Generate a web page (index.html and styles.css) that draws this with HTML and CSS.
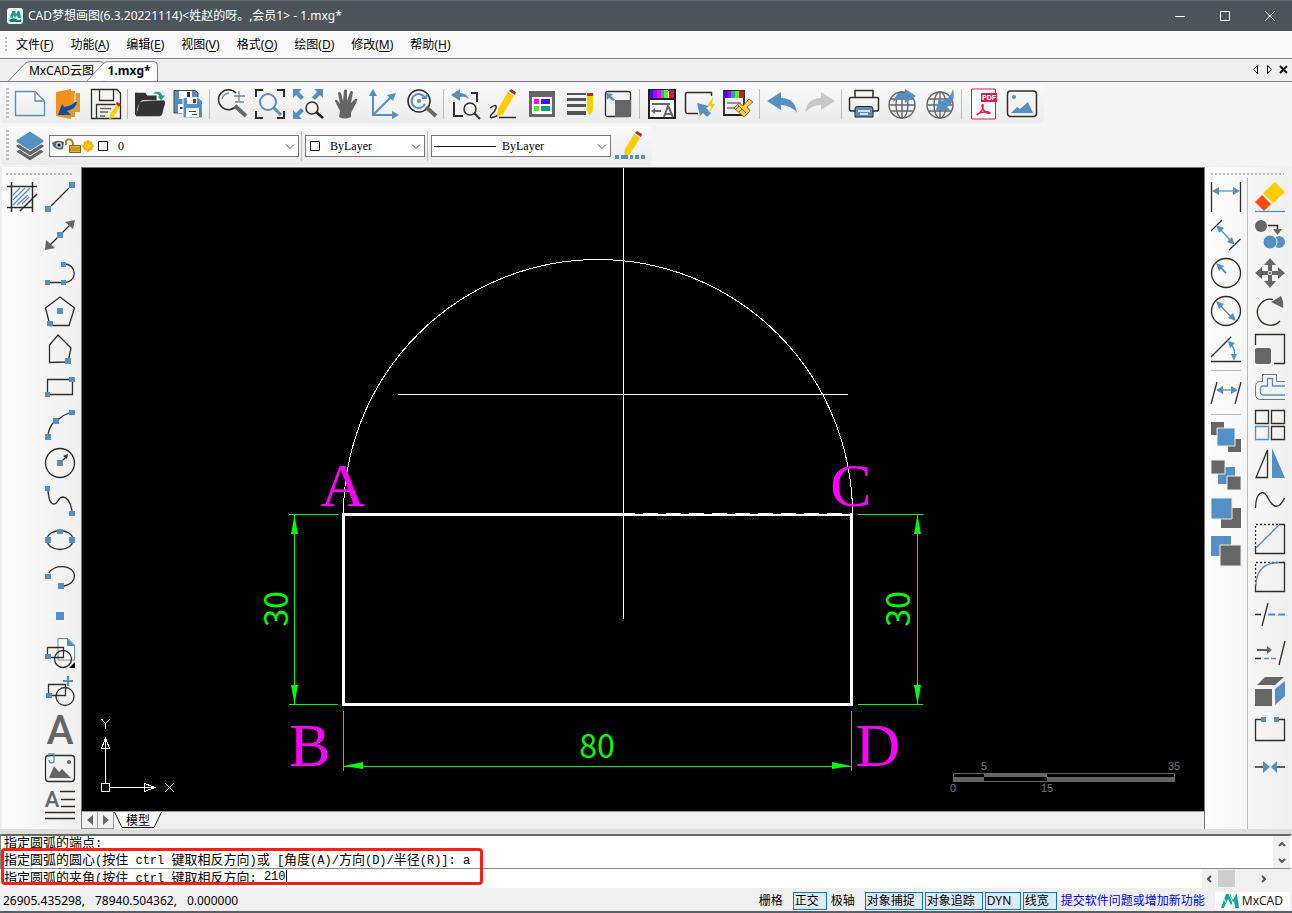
FILE: index.html
```html
<!DOCTYPE html>
<html lang="zh-CN">
<head>
<meta charset="utf-8">
<title>CAD梦想画图</title>
<link rel="stylesheet" href="styles.css">
</head>
<body>
<div class="app">
<header class="titlebar">
  <svg class="app-icon" viewBox="0 0 16 16"><rect width="16" height="16" rx="3" fill="#eef4f4"/><path d="M3 9L5.500 3H8L9 6L11 3H12.500L14 10H11L10 7L8 10L7 7L5.500 10Z" fill="#10a090"/><path d="M2 12Q6 9 9 11T14 11V14H3Z" fill="#088078"/></svg>
  <span class="title">CAD梦想画图(6.3.20221114)&lt;姓赵的呀。,会员1&gt; - 1.mxg*</span>
  <div class="win-buttons">
    <button aria-label="最小化"><svg viewBox="0 0 12 12"><path d="M1 6.500H11"/></svg></button>
    <button aria-label="最大化"><svg viewBox="0 0 12 12"><path d="M1.500 1.500H10.500V10.500H1.500Z"/></svg></button>
    <button aria-label="关闭"><svg viewBox="0 0 12 12"><path d="M1 1L11 11M11 1L1 11"/></svg></button>
  </div>
</header>
<nav class="menubar">
  <span class="grip"></span>
  <button>文件(<u>F</u>)</button><button>功能(<u>A</u>)</button><button>编辑(<u>E</u>)</button><button>视图(<u>V</u>)</button><button>格式(<u>O</u>)</button><button>绘图(<u>D</u>)</button><button>修改(<u>M</u>)</button><button>帮助(<u>H</u>)</button>
</nav>
<div class="tabbar">
  <button class="tab tab-cloud"><svg viewBox="0 0 96 20"><path d="M0 20L16 3Q18 .500 22 .500H92Q95 .500 95.500 4V20" /></svg><span>MxCAD云图</span></button>
  <button class="tab tab-active"><svg viewBox="0 0 72 20"><path d="M0 20L16 3Q18 .500 22 .500H68Q71 .500 71.500 4V20"/></svg><span>1.mxg*</span></button>
  <div class="tab-tools">
    <button aria-label="上一个"><svg viewBox="0 0 9 9"><path d="M6.500 .500V8.500L2.500 4.500Z"/></svg></button>
    <button aria-label="下一个"><svg viewBox="0 0 9 9"><path d="M2.500 .500V8.500L6.500 4.500Z"/></svg></button>
    <button aria-label="关闭标签"><svg viewBox="0 0 9 9"><path class="heavy" d="M1 1L8 8M8 1L1 8"/></svg></button>
  </div>
</div>

<div class="toolrow">
<div class="toolbar">
  <span class="grip"></span>
  <button aria-label="新建"><svg viewBox="0 0 30 30"><path class="bl" fill="#fafafa" d="M.500 2.500H20L29.500 12V26.500H.500Z"/><path class="bl" d="M20 2.500V12H29.500"/></svg></button>
  <button aria-label="打开"><svg viewBox="0 0 30 30"><path fill="#e09a3c" d="M18 2H22V4H27V23H22V28H18Z"/><path fill="#f09020" d="M3 3L18 0V30L3 27Z"/><path stroke="#fff" stroke-width=".8" d="M22 4V14"/><path fill="#0c4fa0" d="M5 26L9 15L11 18Q19 17 22 13H24Q23 20 14 22L18 26Z"/></svg></button>
  <button aria-label="保存"><svg viewBox="0 0 30 30"><path class="k" d="M.500 .500H26L29.500 4V29.500H.500ZM8.500 .500V11.500H22.500V.500M5.500 29V15.500H24.500"/><path stroke="#666" stroke-width="1.500" d="M9 19.500H20M9 23H17M9 27H14"/><path fill="#fc0" d="M26 15L29 18L22 29L18 30L19 25Z"/><path fill="#c8202c" d="M26 13L30 15L28 18L25 15Z"/></svg></button>
  <i class="sep"></i>
  <button aria-label="打开文件夹"><svg viewBox="0 0 32 30"><path fill="#333" d="M0 26V3H11L13 6H23V11H8Q4 12 1 26ZM1 27L5 14Q6 12 9 12L31 11Q33 13 31 18L29 26Q28 28 26 28H1Z"/><path fill="none" stroke="#333" stroke-width="1.500" d="M1 3V26H4"/><path fill="#10a098" d="M20 3Q27 0 29 6H32L28 11L24 7H26Q25 3 20 4Z"/></svg></button>
  <button aria-label="全部保存"><svg viewBox="0 0 30 30"><path fill="#5590c4" stroke="#444" d="M1 1.500H22L25 4V24H1Z"/><path fill="#fff" d="M6 2H19V10H6ZM5 15H14V24H5Z"/><path fill="#333" d="M14 3H17V8H14ZM7 18H12V20H7Z"/><path fill="#5590c4" stroke="#fff" d="M10 8.500H25L29.500 12V29H10Z"/><path fill="#fff" d="M14 9H24V15H14ZM13 19H26V28H13Z"/><path fill="#444" d="M20 10H23V14H20ZM16 22H23V23H16ZM19 25H24V26H19Z"/></svg></button>
  <i class="sep"></i>
  <button aria-label="缩放"><svg viewBox="0 0 30 30"><path class="k2" d="M20 16A10 10 0 1 1 19 4"/><path class="bl" stroke-width="1.800" d="M5 10Q6 5 12 4M22 2V12M17 7H28M18 13H27"/><path stroke="#666" stroke-width="4" d="M18 17L29 27"/></svg></button>
  <button aria-label="窗口缩放"><svg viewBox="0 0 30 30"><path class="k2 strong" d="M1 8V1H8M22 1H29V8M1 22V29H8M22 29H29V22"/><circle class="bl wide" cx="13" cy="13" r="8"/><path stroke="#5590c4" stroke-width="3" d="M18 18L26 26"/></svg></button>
  <button aria-label="全图"><svg viewBox="0 0 30 30"><path class="b" d="M0 0H9L6 3L11 8L8 11L3 6L0 9ZM30 0V9L27 6L22 11L19 8L24 3L21 0ZM0 30V21L3 24L8 19L11 22L6 27L9 30Z"/><circle class="k2" cx="19" cy="19" r="6"/><path stroke="#222" stroke-width="2.500" d="M23 23L30 29"/></svg></button>
  <button aria-label="平移"><svg viewBox="0 0 30 30"><path fill="#666" d="M8 28L9 22L4 12Q4 10 6 11L9 15L7 4Q8 2 10 4L12 12L13 1Q14 0 16 1V12L19 3Q20 1 22 3L20 14L24 10Q27 9 26 12L20 24V28Q14 31 8 28Z"/></svg></button>
  <button aria-label="坐标"><svg viewBox="0 0 30 30"><path stroke="#5590c4" stroke-width="2" fill="none" d="M4 5V26H25M5 25L22 8"/><path class="b" d="M4 0L8 7H0ZM30 26L23 22V30ZM27 4L24 12L18 6Z"/></svg></button>
  <button aria-label="返回缩放"><svg viewBox="0 0 30 30"><circle class="k2" cx="12" cy="12" r="11"/><path class="bl wide" d="M18 9A7 7 0 1 0 18 15M15 9L19 9L20 5"/><circle cx="12" cy="12" r="2" fill="#5590c4"/><path stroke="#666" stroke-width="4" d="M19 18L29 27"/></svg></button>
  <i class="sep"></i>
  <button aria-label="上一视图"><svg viewBox="0 0 30 30"><path class="b" d="M0 6L9 0V4Q16 4 18 10Q14 7 9 8V12Z"/><path class="k2 strong" d="M3 13V27H12M20 4H26V13"/><circle class="k2" cx="19" cy="20" r="6"/><path class="k2 strong" d="M23 24L29 30"/></svg></button>
  <button aria-label="画笔"><svg viewBox="0 0 30 30"><path class="k2" d="M1 19Q8 14 7 19Q6 23 2 26Q0 30 5 28L10 26M10 28.500H27"/><path fill="#fc0" d="M19 3L25 7L14 25L8 28L9 20Z"/><path fill="#c8202c" d="M20 2L22 0L27 3L26 6Z"/></svg></button>
  <button aria-label="图层属性"><svg viewBox="0 0 30 30"><path fill="#666" d="M2 2H28V28H2Z"/><path fill="#fff" d="M5 8H25V25H5Z"/><path fill="#f0f" d="M7 10H12V15H7Z"/><path fill="#4010f0" d="M14 10H23V15H14Z"/><path fill="#4e2" d="M7 17H12V22H7Z"/><path fill="#0aa098" d="M14 17H23V22H14Z"/></svg></button>
  <button aria-label="线型"><svg viewBox="0 0 30 30"><path fill="#555" d="M2 4H21V6H2ZM2 9H21V12H2ZM2 15H21V18H2ZM2 22H21V26H2Z"/><path fill="#fc0" d="M22 6H28V22L25 26L22 22Z"/><path fill="#c8202c" d="M22 4H28V7H22Z"/></svg></button>
  <button aria-label="视口"><svg viewBox="0 0 30 30"><rect class="k" x="2.500" y="2.500" width="25" height="25" rx="2"/><path fill="#666" d="M12 11H28V28H12Z"/><path class="b" d="M3 4L10 5L8 7L12 11L10 12L6 9L4 11Z"/></svg></button>
  <i class="sep"></i>
  <button aria-label="文字颜色"><svg viewBox="0 0 30 30"><path fill="#f7f7f7" stroke="#222" stroke-width="2" d="M2 1H28V29H2Z"/><path fill="#4010f0" d="M3 1H7V9H3Z"/><path fill="#a010f0" d="M6 1H10V9H6Z"/><path fill="#f0f" d="M10 1H14V9H10Z"/><path fill="#16b4a0" d="M14 1H17V9H14Z"/><path fill="#6e1" d="M17 1H21V9H17Z"/><path fill="#d01c24" d="M22 1H27V9H22Z"/><path fill="#222" d="M2 9H28V11H2Z"/><path stroke="#666" stroke-width="2" fill="none" d="M5 15H23M7 22H14M17 28L21 17L26 28M18 25H25"/><path fill="#666" d="M4 22L8 19V25Z"/></svg></button>
  <button aria-label="快速选择"><svg viewBox="0 0 30 30"><path class="k2" d="M13 24.500H2Q.500 24 .500 22V5Q.500 3.500 2 3.500H26.500V7"/><path class="b" d="M12 14L24 17L21 19L26 24L22 28L18 24L15 27Z"/><path fill="#fc0" d="M28 8L22 17H26L24 24L30 15H27Z"/></svg></button>
  <button aria-label="格式刷"><svg viewBox="0 0 30 30"><path fill="#eee" stroke="#222" stroke-width="1.800" d="M1 2H21V26H1Z"/><path fill="#4010f0" d="M1 2H5V9H1Z"/><path fill="#a010f0" d="M5 2H8V9H5Z"/><path fill="#16b4a0" d="M8 2H12V9H8Z"/><path fill="#6e1" d="M12 2H16V9H12Z"/><path fill="#d01c24" d="M16 2H21V9H16Z"/><path stroke="#777" stroke-width="1.500" d="M4 14H18M4 19H15"/><path fill="#fc3" stroke="#866" d="M26 10L30 13L24 18L27 22L21 28L11 19L16 14L20 17Z"/><path stroke="#856" fill="none" d="M15 16L23 24M13 20L16 17M16 23L19 20"/></svg></button>
  <i class="sep"></i>
  <button aria-label="撤销"><svg viewBox="0 0 30 30"><path class="b" d="M0 12L14 3V9Q28 9 30 24Q24 16 14 16V21Z"/></svg></button>
  <button aria-label="重做"><svg viewBox="0 0 30 30"><path fill="#c8c8c8" d="M30 12L16 3V9Q2 9 0 24Q6 16 16 16V21Z"/></svg></button>
  <i class="sep"></i>
  <button aria-label="打印"><svg viewBox="0 0 30 30"><path class="k2" fill="#fff" d="M6 8V1.500H24V8M6 22H2Q.500 22 .500 20V10Q.500 8.500 2 8.500H28Q29.500 8.500 29.500 10V20Q29.500 22 28 22H24"/><path fill="#5590c4" stroke="#222" d="M6 28V20Q6 17.500 8 17.500H22Q24 17.500 24 20V28Z"/><path stroke="#fff" stroke-width="1.500" d="M9 22H21M11 25H19"/></svg></button>
  <button aria-label="上传"><svg viewBox="0 0 30 30"><g class="globe"><circle cx="15" cy="16" r="13"/><ellipse cx="15" cy="16" rx="6" ry="13"/><path d="M15 3V29M2 16H28M4 10H26M4 22H26"/></g><path class="b" d="M6 13Q8 3 18 4V0L29 7L18 14V10Q11 9 6 13Z"/></svg></button>
  <button aria-label="下载"><svg viewBox="0 0 30 30"><g class="globe"><circle cx="15" cy="16" r="13"/><ellipse cx="15" cy="16" rx="6" ry="13"/><path d="M15 3V29M2 16H28M4 10H26M4 22H26"/></g><path class="b" d="M28 0Q31 13 22 18L25 21L11 21L14 9L17 12Q26 9 28 0Z"/></svg></button>
  <i class="sep"></i>
  <button aria-label="导出PDF"><svg viewBox="0 0 30 30"><path fill="#fff" stroke="#d81e4a" d="M2.500 0H26.500V30H2.500Z"/><rect x="12" y="4" width="16" height="9" fill="#d81e4a"/><text x="13" y="11" class="pdf">PDF</text><path fill="none" stroke="#d81e4a" stroke-width="1.500" d="M8 26Q15 21 14 16Q12 15 14 20Q17 25 21 24Q20 22 15 23Q9 24 8 26Z"/></svg></button>
  <button aria-label="图像"><svg viewBox="0 0 30 30"><rect class="k2" x=".500" y="2" width="29" height="25.500" rx="3"/><path class="b" d="M4 24L10 18L13 20L21 13L26 24Z"/><circle cx="7" cy="8" r="2" fill="#5590c4"/></svg></button>
</div>
</div>
<div class="toolrow">
<div class="toolbar">
  <span class="grip"></span>
  <button aria-label="图层管理"><svg viewBox="0 0 30 30"><path fill="#666" stroke="#f7f7f7" d="M1 20L15 13L29 20V21L15 30L1 21Z"/><path fill="#666" stroke="#f7f7f7" d="M1 14L15 8L29 14V16L15 25L1 16Z"/><path fill="#5590c4" stroke="#f7f7f7" d="M1 9L15 0L29 9V11L15 20L1 11Z"/></svg></button>
  <div class="combo combo-layer"><select aria-label="图层"><option>0</option></select>
    <svg class="combo-art" viewBox="0 0 60 16"><path fill="#567" d="M1 5Q6 1 13 4L12 11Q6 13 2 8Z"/><circle cx="8" cy="7" r="3" fill="#bcd"/><circle cx="8" cy="7" r="1.500" fill="#123"/><path fill="none" stroke="#b08010" stroke-width="2" d="M15 7V3Q17 0 20 2Q22 3 22 8"/><path fill="#e8b830" stroke="#8a6410" d="M18.500 7.500H29.500V14.500H18.500Z"/><path stroke="#a87818" d="M19 10H29M19 12H29"/><circle cx="37" cy="8" r="4" fill="#fc0" stroke="#f8a800" stroke-width="2"/><path stroke="#f8a800" stroke-width="1.500" d="M37 2V4M37 12V14M31 8H33M41 8H43M33 4L34 5M41 4L40 5M33 12L34 11M41 12L40 11"/><path fill="#fff" stroke="#111" d="M47.500 3.500H56.500V12.500H47.500Z"/></svg>
    <svg class="chev" viewBox="0 0 10 6"><path d="M1 .500L5 4.500L9 .500"/></svg></div>
  <i class="sep"></i>
  <div class="combo combo-color"><select aria-label="颜色"><option>ByLayer</option></select><svg class="combo-art" viewBox="0 0 16 16"><path fill="#fff" stroke="#111" d="M3.500 3.500H12.500V12.500H3.500Z"/></svg><svg class="chev" viewBox="0 0 10 6"><path d="M1 .500L5 4.500L9 .500"/></svg></div>
  <i class="sep"></i>
  <div class="combo combo-line"><select aria-label="线型"><option>ByLayer</option></select><svg class="combo-art" viewBox="0 0 64 16"><path stroke="#111" d="M1 8.500H63"/></svg><svg class="chev" viewBox="0 0 10 6"><path d="M1 .500L5 4.500L9 .500"/></svg></div>
  <button aria-label="线型编辑"><svg viewBox="0 0 30 30"><path fill="#fc0" d="M19 3L25 7L15 23L9 26L10 18Z"/><path fill="#c8202c" d="M20 2L22 0L27 3L26 6Z"/><path class="b" d="M0 24H4V28H0ZM6 24H13V28H6ZM15 24H18V28H15ZM20 24H24V28H20ZM26 24H30V28H26Z"/></svg></button>
</div>
</div>

<main class="main">
<aside class="side">
<div class="dots"></div>
<div class="cols">
<div class="col">
  <button aria-label="填充"><svg viewBox="0 0 30 30"><path class="k2" d="M0 4.500H30M0 25.500H25M4.500 0V30M25.500 0V30M13 29L30 12"/><path class="bl" stroke-width="1.800" d="M6 13L13 6M6 18L18 6M6 23L23 6M10 23L21 13M15 22L22 15"/></svg></button>
</div>
<div class="col">
  <button aria-label="直线"><svg viewBox="0 0 30 30"><path class="k" d="M6 24L24 6"/><path class="b" d="M24 0H30V6H24ZM0 24H6V30H0Z"/></svg></button>
  <button aria-label="构造线"><svg viewBox="0 0 30 30"><path class="k" d="M5 25L25 5"/><path class="g" d="M30 0L28 9L20 2ZM0 30L1 20L10 28Z"/><path class="b" d="M12 12H18V18H12Z"/></svg></button>
  <button aria-label="多段线"><svg viewBox="0 0 30 30"><path class="k" d="M4 24.500H17M20 6A9 9 0 0 1 20 24.500"/><path class="b" d="M0 22H5V27H0ZM16 22H21V27H16ZM16 4H21V9H16Z"/></svg></button>
  <button aria-label="正多边形"><svg viewBox="0 0 30 30"><path class="k" d="M15 1L29.500 12L24 29.500H5L.500 12Z"/><path class="b" d="M12 12H18V18H12ZM2 25H8V30H2Z"/></svg></button>
  <button aria-label="多边形"><svg viewBox="0 0 30 30"><path class="k" d="M13 1L26 14L23 28L4.500 28.500V11Z"/><path class="b" d="M20 24H26V30H20Z"/></svg></button>
  <button aria-label="矩形"><svg viewBox="0 0 30 30"><path class="k" d="M2.500 7.500H27.500V22.500H2.500Z"/><path class="b" d="M24 5H30V10H24ZM0 20H5V25H0Z"/></svg></button>
  <button aria-label="圆弧"><svg viewBox="0 0 30 30"><path class="k" d="M3 24Q5 16 9 12M14 9Q18 5 24 3"/><path class="b" d="M24 0H30V5H24ZM8 8H14V14H8ZM0 24H6V30H0Z"/></svg></button>
  <button aria-label="圆"><svg viewBox="0 0 30 30"><circle class="k" cx="15" cy="15" r="14.500"/><path class="k" d="M17 13L22 8"/><path fill="#333" d="M23 6L22 11L18 8Z"/><path class="b" d="M12 12H18V18H12Z"/></svg></button>
  <button aria-label="样条曲线"><svg viewBox="0 0 30 30"><path class="k" d="M3 5Q4 18 9 18C13 18 13 11 18 11Q25 12 27 25"/><path class="b" d="M0 0H5V5H0ZM24 25H30V30H24Z"/></svg></button>
  <button aria-label="椭圆"><svg viewBox="0 0 30 30"><ellipse class="k" cx="15" cy="16" rx="13" ry="9.500"/><path class="b" d="M12 5H18V10H12ZM0 13H6V19H0ZM24 13H30V19H24Z"/></svg></button>
  <button aria-label="椭圆弧"><svg viewBox="0 0 30 30"><path class="k" d="M4 11C8 2 29 2 29.500 14C29 21 24 23 19 24"/><path class="b" d="M0 12H6V17H0ZM13 21H19V27H13Z"/></svg></button>
  <button aria-label="点"><svg viewBox="0 0 30 30"><path class="b" d="M11 12H19V20H11Z"/></svg></button>
  <button aria-label="插入块"><svg viewBox="0 0 30 30"><path fill="#fff" stroke="#5590c4" d="M13 .500H23L29.500 7V22H13Z"/><path class="b" d="M22 0V8H30Z"/><path class="k" d="M2.500 9.500H18.500V19.500H2.500Z"/><circle class="k" cx="18" cy="21" r="8.500"/><path class="b" d="M0 16H6V21H0Z"/><path d="M30 24V30H24Z"/></svg></button>
  <button aria-label="创建块"><svg viewBox="0 0 30 30"><path class="bl wide" d="M23 0V10M18 5H28"/><path class="k" d="M3.500 8.500H20.500V19.500H3.500Z"/><circle class="k" cx="20" cy="20.500" r="9"/><path class="b" d="M1 17H7V22H1Z"/></svg></button>
  <button aria-label="文字"><svg viewBox="0 0 30 30"><text class="glyph big" x="15" y="30">A</text></svg></button>
  <button aria-label="插入图片"><svg viewBox="0 0 30 30"><rect class="k" x=".500" y="3.500" width="29" height="26" rx="3"/><path class="g" d="M4 26L9 14L14 20L17 17L26 26Z"/><circle class="g" cx="24" cy="10" r="2"/><path class="bl" d="M4 5V2H9V9Q9 11 6.500 11Q4 11 4 8"/></svg></button>
  <button aria-label="多行文字"><svg viewBox="0 0 30 30"><text class="glyph small" x="7" y="17">A</text><path class="k2" d="M15 1.500H30M16 9.500H30M16 16.500H30M0 22.500H30M0 28.500H30"/></svg></button>
</div>
</div>
</aside>

<section class="work">
<svg class="canvas" role="img" aria-label="绘图区">
<g transform="translate(-82 -168)">
  <path class="cad-thin" d="M343.500 514.500A254.500 255 0 0 1 852.500 514.500"/>
  <path class="cad-thick" d="M343.500 514.500H851.500V704.500H343.500Z"/>
  <path stroke="#000" stroke-dasharray="8 15" d="M635 513.500H850"/>
  <path class="cad-thin" d="M623.500 168V619M398 394.500H848"/>
  <path class="cad-dim" d="M289 514.500H338M289 704.500H338M294.500 515V704M858 514.500H923M858 704.500H923M917.500 515V704M343.500 711V771M851.500 711V771M344 766.500H851"/>
  <path class="cad-fill" d="M294.500 515L291 534H298ZM294.500 704L291 685H298ZM917.500 515L914 534H921ZM917.500 704L914 685H921ZM344 766L363 762V769ZM851 766L832 762V769Z"/>
  <text class="dim-text" x="597" y="758">80</text>
  <text class="dim-text" transform="translate(288 609) rotate(-90)">30</text>
  <text class="dim-text" transform="translate(910 609) rotate(-90)">30</text>
  <g class="point-label"><text x="343" y="506">A</text><text x="851" y="506">C</text><text x="310" y="766">B</text><text x="878" y="766">D</text></g>
  <path class="cad-thin" d="M101.500 783.500H109.500V791.500H101.500ZM105.500 783V749M110 787.500H144M105.500 738L101.500 748.500H109.500ZM155 787.500L144.500 783.500V791.500ZM105.500 739V748M154 787.500H145M101.500 719L105.500 723.500L110 719M105.500 723V729M165 783L174 792M174 783L165 792"/>
  <path fill="#646464" d="M953 773H1175V782H953Z"/>
  <path d="M954 774H984V777H954ZM984 777H1047V781H984ZM1047 774H1174V777H1047Z"/>
  <g class="scale-text"><text x="984" y="770">5</text><text x="1174" y="770">35</text><text x="953" y="792">0</text><text x="1047" y="792">15</text></g>
</g>
</svg>
<div class="sheet-tabs">
  <button class="nav" aria-label="向左"><svg viewBox="0 0 6 10"><path d="M6 0V10L0 5Z"/></svg></button>
  <button class="nav" aria-label="向右"><svg viewBox="0 0 6 10"><path d="M0 0V10L6 5Z"/></svg></button>
  <button class="sheet"><svg viewBox="0 0 48 16"><path d="M.500 0L8 15.500H40L47.500 0"/></svg><span>模型</span></button>
</div>
</section>

<aside class="side side-right">
<div class="dots"></div>
<div class="cols">
<div class="col">
  <button aria-label="线性标注"><svg viewBox="0 0 30 30"><path class="k" d="M.500 0V30M29.500 0V30"/><path class="bl" d="M6 9H24"/><path class="b" d="M1 9L8 5V13ZM29 9L22 5V13Z"/></svg></button>
  <button aria-label="对齐标注"><svg viewBox="0 0 30 30"><path class="k" d="M0 11L11 0M18 30L29.500 19"/><path class="bl" d="M8 8L21 22"/><path class="b" d="M5 5L13 8L8 13ZM24 25L16 22L21 17Z"/></svg></button>
  <button aria-label="半径标注"><svg viewBox="0 0 30 30"><circle class="k" cx="15" cy="15" r="14.500"/><path class="bl wide" d="M15 15L8 8"/><path class="b" d="M5 5L13 8L8 13Z"/></svg></button>
  <button aria-label="直径标注"><svg viewBox="0 0 30 30"><circle class="k" cx="15" cy="15" r="14.500"/><path class="bl" d="M8 8L21 22"/><path class="b" d="M5 5L13 8L8 13ZM25 25L17 22L22 17Z"/></svg></button>
  <button aria-label="角度标注"><svg viewBox="0 0 30 30"><path class="k" d="M0 23L20 3M0 27.500H30"/><path class="bl" d="M20 10Q25 16 23 23"/><path class="b" d="M17 7L24 9L19 14ZM23 27L20 20H26Z"/></svg></button>
  <i class="hsep"></i>
  <button aria-label="连续标注"><svg viewBox="0 0 30 30"><path class="k" d="M0 26L6 4M24 26L30 4"/><path class="bl" d="M10 12H22"/><path class="b" d="M5 12L12 8V16ZM27 12L20 8V16Z"/></svg></button>
  <i class="hsep"></i>
  <button aria-label="前置"><svg viewBox="0 0 30 30"><path class="g" d="M0 0H13V13H0ZM17 17H30V30H17Z"/><path class="b edge" d="M6 6H24V24H6Z"/></svg></button>
  <button aria-label="后置"><svg viewBox="0 0 30 30"><path class="b" d="M7 7H24V24H7Z"/><path class="g edge" d="M0 0H14V14H0ZM16 16H30V30H16Z"/></svg></button>
  <button aria-label="置于对象之上"><svg viewBox="0 0 30 30"><path class="g" d="M10 10H30V30H10Z"/><path class="b edge" d="M0 0H21V21H0Z"/></svg></button>
  <button aria-label="置于对象之下"><svg viewBox="0 0 30 30"><path class="b" d="M0 0H20V20H0Z"/><path class="g edge" d="M9 9H30V30H9Z"/></svg></button>
</div>
<div class="col col-lined">
  <button aria-label="删除"><svg viewBox="0 0 30 30"><path fill="#fc0" d="M20 0L30 10L18 21L8 11Z"/><path fill="#ff4a10" d="M7 13L16 22L9 29L0 20Z"/><path class="bl" d="M0 29.500H30"/></svg></button>
  <button aria-label="复制"><svg viewBox="0 0 30 30"><circle class="g" cx="6" cy="6" r="6"/><path class="k2" d="M13 5.500H22.500V10"/><path class="g" d="M18 9H27L22.500 15Z"/><circle cx="24" cy="22" r="6" fill="#5590c4"/><circle cx="15" cy="22" r="7" fill="#5590c4" stroke="#f5f5f5"/></svg></button>
  <button aria-label="移动"><svg viewBox="0 0 30 30"><path class="g" d="M15 0L21 7H17V13H23V9L30 15L23 21V17H17V23H21L15 30L9 23H13V17H7V21L0 15L7 9V13H13V7H9Z"/><path stroke="#ddd" fill="none" d="M13.500 13.500H16.500V16.500H13.500Z"/></svg></button>
  <button aria-label="旋转"><svg viewBox="0 0 30 30"><path class="k" d="M18 3.500A13 13 0 1 0 25 25"/><path class="g" d="M16 6L26 0Q29 6 28 12Z"/></svg></button>
  <button aria-label="缩放对象"><svg viewBox="0 0 30 30"><path class="k" d="M.500 11V.500H29.500V29.500H19"/><rect class="g" y="14" width="16" height="16" rx="2"/></svg></button>
  <button aria-label="偏移"><svg viewBox="0 0 30 30"><path fill="none" stroke="#777" d="M30 9.500H21.500V2.500H7.500V9.500H5Q.500 9.500 .500 15V22Q.500 27.500 6 27.500H30"/><path class="bl" d="M30 14H17.500V6.500H12.500V14H8Q5.500 14 5.500 17V20Q5.500 23 9 23H30"/></svg></button>
  <button aria-label="阵列"><svg viewBox="0 0 30 30"><path class="k" d="M.500 .500H13.500V13.500H.500ZM16.500 .500H29.500V13.500H16.500ZM16.500 16.500H29.500V29.500H16.500Z"/><path class="bl" d="M.500 16.500H13.500V29.500H.500Z"/></svg></button>
  <button aria-label="镜像"><svg viewBox="0 0 30 30"><path class="k" d="M12.500 2V29.500H1Z"/><path class="b" d="M17 0L30 30H17Z"/></svg></button>
  <button aria-label="编辑样条"><svg viewBox="0 0 30 30"><path class="k" d="M.500 22C1 4 9 4 13 12C18 22 24 24 29.500 12"/></svg></button>
  <button aria-label="倒角"><svg viewBox="0 0 30 30"><path class="k" stroke-dasharray="2 2" d="M.500 24V.500H24"/><path class="k" d="M.500 24V29.500H29.500V.500H24"/><path class="bl" d="M1 24L24 1"/></svg></button>
  <button aria-label="圆角"><svg viewBox="0 0 30 30"><path class="k" stroke-dasharray="2 2" d="M.500 24V.500H24"/><path class="k" d="M.500 24V29.500H29.500V.500H24"/><path class="bl" d="M1 24Q1 1 24 .500"/></svg></button>
  <button aria-label="修剪"><svg viewBox="0 0 30 30"><path class="k" d="M0 14.500H6M7 26L13 3"/><path class="bl wide" d="M13 14.500H20M23 14.500H30"/></svg></button>
  <button aria-label="延伸"><svg viewBox="0 0 30 30"><path class="k" d="M2 12H14M0 20.500H6M24 27L30 3"/><path class="g" d="M17 12L12 8V16Z"/><path class="bl" d="M9 20.500H14M16 20.500H21"/></svg></button>
  <button aria-label="分解"><svg viewBox="0 0 30 30"><path class="g" d="M0 13H17V30H0ZM2 9L10 1H29L20 9Z"/><path class="b" d="M20 13L30 5V20L20 29Z"/></svg></button>
  <button aria-label="打断"><svg viewBox="0 0 30 30"><path class="k" d="M6 5.500H.500V26.500H29.500V5.500H24"/><path class="b" d="M6 3H11V8H6ZM19 3H24V8H19Z"/></svg></button>
  <button aria-label="合并"><svg viewBox="0 0 30 30"><path class="k2" d="M0 15H9M21 15H30"/><path class="b" d="M8 9L15 15L8 21ZM22 9L16 15L22 21Z"/></svg></button>
</div>
</div>
</aside>
</main>

<section class="console">
  <div class="history"><div class="log"><div class="line">指定圆弧的端点<span class="lat">:</span></div><div class="line">指定圆弧的圆心<span class="lat">(</span>按住<span class="lat"> ctrl </span>键取相反方向<span class="lat">)</span>或<span class="lat"> [</span>角度<span class="lat">(A)/</span>方向<span class="lat">(D)/</span>半径<span class="lat">(R)]: a</span></div></div>
    <div class="vscroll"><svg viewBox="0 0 8 5"><path d="M1 4L4 1L7 4"/></svg><svg viewBox="0 0 8 5"><path d="M1 1L4 4L7 1"/></svg></div></div>
  <div class="entry"><label class="line" for="cmd">指定圆弧的夹角<span class="lat">(</span>按住<span class="lat"> ctrl </span>键取相反方向<span class="lat">: </span></label><input id="cmd" value="210"><i class="caret"></i>
    <div class="hscroll"><svg viewBox="0 0 5 8"><path d="M4 1L1 4L4 7"/></svg><i class="thumb"></i><svg viewBox="0 0 5 8"><path d="M1 1L4 4L1 7"/></svg></div></div>
  <div class="highlight"></div>
</section>
<footer class="status">
  <div class="coords"><span>26905.435298,</span><span>78940.504362,</span><span>0.000000</span></div>
  <button>栅格</button><button class="on">正交</button><button>极轴</button><button class="on">对象捕捉</button><button class="on">对象追踪</button><button class="on">DYN</button><button class="on">线宽</button>
  <a href="#">提交软件问题或增加新功能</a>
  <span class="brand"><svg viewBox="0 0 18 14"><path fill="#10a898" d="M5 0H9L12 6L15 0H16L18 14H14L13 7L10 11L7 5L3 14H0Z"/><path stroke="#fff" d="M8 0L14 14M3 5L8 14"/></svg>MxCAD</span>
</footer>
</div>
</body>
</html>
```
FILE: styles.css
```css
* { box-sizing: border-box; }
body { margin: 0; font: 12px/16px "Noto Sans", "Noto Sans CJK SC", sans-serif; color: #000; background: #f0f0f0; }
button { border: 0; padding: 0; margin: 0; background: none; font: inherit; color: inherit; }
svg { display: block; }
.app { height: 100vh; min-height: 913px; display: flex; flex-direction: column; border-bottom: 2px solid #596068; overflow: hidden; }

.titlebar { height: 31px; flex: none; display: flex; align-items: center; background: #4b555b; border-top: 1px solid #5c676d; color: #fff; padding-left: 7px; }
.app-icon { width: 16px; height: 16px; margin-right: 5px; }
.title { flex: 1; white-space: nowrap; }
.win-buttons { display: flex; }
.win-buttons button { width: 45px; height: 30px; display: grid; place-items: center; }
.win-buttons svg { width: 12px; height: 12px; fill: none; stroke: #fff; }

.menubar { height: 28px; flex: none; display: flex; align-items: center; gap: 1px; background: #fafafa; border-bottom: 1px solid #80808c; padding-left: 5px; }
.menubar button { padding: 0 8px; white-space: nowrap; }
.menubar u { text-underline-offset: 2px; }
.menubar .grip { margin-right: 0; }
.grip { width: 2px; height: 16px; margin-right: 2px; background: repeating-linear-gradient(#bbb 0 2px, transparent 2px 4px); }

.tabbar { height: 23px; flex: none; display: flex; align-items: flex-end; background: #efefef; border-bottom: 1px solid #80808c; padding-left: 8px; }
.tab { position: relative; height: 20px; white-space: nowrap; }
.tab svg { position: absolute; inset: 0; width: 100%; height: 100%; fill: #f3f3f3; stroke: #777; }
.tab span { position: relative; }
.tab-cloud { width: 97px; padding-left: 10px; }
.tab-active { width: 71px; margin-left: -18px; padding-left: 13px; font-weight: bold; }
.tab-active svg { fill: #fff; }
.tab-tools { margin-left: auto; display: flex; gap: 5px; padding: 0 4px 7px 0; }
.tab-tools svg { width: 9px; height: 9px; fill: none; stroke: #111; }
.tab-tools .heavy { stroke-width: 2; }

.toolrow { height: 42px; flex: none; display: flex; padding: 2px 0 1px 1px; background: #f5f5f5; }
.toolbar { display: flex; align-items: center; padding: 0 3px 0 5px; border-radius: 4px; background: linear-gradient(#fafafa, #ececec); }
.toolbar .grip { height: 32px; width: 3px; }
.toolbar button { width: 38px; height: 38px; display: grid; place-items: center; }
.toolbar button svg, .col svg { width: 30px; height: 30px; overflow: visible; }
.sep { width: 6px; height: 30px; background: linear-gradient(90deg, transparent 2px, #bbb 2px 3px, transparent 3px); }
.k { fill: none; stroke: #302c28; stroke-width: 1.3; }
.k2 { fill: none; stroke: #302c28; stroke-width: 1.5; }
.strong { stroke-width: 2; }
.b { fill: #5590c4; }
.bl { fill: none; stroke: #5590c4; stroke-width: 1.3; }
.wide { stroke-width: 2; }
.g { fill: #666; }
.edge { stroke: #ebebeb; }
.globe { fill: none; stroke: #666; stroke-width: 1.4; }
.pdf { font: bold 7px "Liberation Sans", sans-serif; fill: #fff; }
.glyph { font-family: Roboto, sans-serif; font-weight: 500; fill: #666; text-anchor: middle; }
.big { font-size: 41px; }
.small { font-size: 22px; }

.combo { position: relative; height: 22px; }
.combo select { appearance: none; width: 100%; height: 100%; border: 1px solid #777; border-radius: 0; background: #fff; font: 12px "Liberation Serif", serif; color: #000; padding: 0 16px 0 0; }
.combo-layer { width: 250px; }
.combo-layer select { padding-left: 68px; }
.combo-color { width: 120px; }
.combo-color select { padding-left: 24px; }
.combo-line { width: 180px; }
.combo-line select { padding-left: 70px; }
.combo-art { position: absolute; left: 2px; top: 3px; height: 16px; pointer-events: none; }
.chev { position: absolute; right: 4px; top: 9px; width: 10px; height: 6px; fill: none; stroke: #555; pointer-events: none; }

.main { flex: 1; min-height: 0; display: flex; margin-top: 1px; }
.side { width: 81px; flex: none; padding: 6px 2px 0 1px; background: linear-gradient(90deg, #fdfdfd, #f0f0f0); border-left: 2px solid #eee; }
.dots { height: 2px; margin: 0 5px 3px 3px; background: repeating-linear-gradient(90deg, #bbb 0 2px, transparent 2px 4px); }
.cols { display: flex; }
.col { width: 38px; }
.col button { width: 38px; height: 38px; display: grid; place-items: center; }
.hsep { display: block; height: 6px; margin: 0 4px; background: linear-gradient(transparent 2px, #bbb 2px 3px, transparent 3px); }
.side-right { width: 88px; padding: 6px 0 0 1px; border-left: 1px solid #777; }
.side-right .dots { margin: 0 8px 3px 5px; }
.side-right .cols { padding-left: 1px; height: 100%; }
.col-lined { width: 44px; border-left: 1px solid #bbb; margin-left: 2px; padding-left: 3px; }
.work { flex: 1; min-width: 0; display: flex; flex-direction: column; border: 1px solid #777; border-width: 1px 0 0 1px; }
.canvas { flex: 1; width: 100%; min-height: 0; background: #000; }
.cad-thin { fill: none; stroke: #fff; shape-rendering: crispEdges; }
.cad-thick { fill: none; stroke: #fff; stroke-width: 3; shape-rendering: crispEdges; }
.cad-dim { fill: none; stroke: #0f0; shape-rendering: crispEdges; }
.cad-fill { fill: #0f0; }
.dim-text { font: 32px "Noto Sans CJK SC", sans-serif; fill: #0f0; text-anchor: middle; }
.point-label { font: 62px "Liberation Serif", serif; fill: #f0f; text-anchor: middle; }
.scale-text { font: 11px "Liberation Sans", sans-serif; fill: #777; text-anchor: middle; }
.sheet-tabs { height: 18px; flex: none; display: flex; border-top: 1px solid #999; }
.nav { width: 16px; height: 17px; display: grid; place-items: center; border: 1px solid #999; border-width: 0 1px 1px 0; }
.nav svg { width: 6px; height: 10px; fill: #666; }
.sheet { position: relative; width: 48px; height: 17px; }
.sheet svg { position: absolute; inset: 0; width: 48px; height: 16px; fill: #fff; stroke: #111; }
.sheet span { position: relative; }

.console { position: relative; flex: none; border-top: 5px solid #dedede; background: #fff; }
.history { height: 35px; display: flex; border: 1px solid #888; border-width: 2px 2px 1px 1px; border-top-color: #666; border-right-color: #fff; }
.log { flex: 1; padding-left: 3px; min-width: 0; display: flex; flex-direction: column; justify-content: flex-end; overflow: hidden; }
.line { flex: none; height: 17px; font: 13px/16px "Noto Sans CJK SC", sans-serif; white-space: pre; }
.lat { font: 12px/14px "Liberation Mono", monospace; }
.vscroll { width: 17px; background: #f0f0f0; display: flex; flex-direction: column; justify-content: space-around; align-items: center; }
.vscroll svg { width: 8px; height: 5px; }
.vscroll svg, .hscroll svg { fill: none; stroke: #555; stroke-width: 2; }
.entry { height: 21px; display: flex; padding-left: 4px; border-bottom: 2px solid #f0f0f0; }
.entry .line { line-height: 15px; }
.entry input { width: 22px; height: 16px; border: 0; padding: 0; outline: 0; font: 12px "Liberation Mono", monospace; background: transparent; }
.caret { width: 1px; height: 13px; margin-top: 1px; background: #000; }
.hscroll { margin-left: auto; width: 90px; padding: 0 26px 0 5px; background: #f0f0f0; display: flex; align-items: center; }
.hscroll svg { width: 5px; height: 8px; }
.thumb { width: 17px; height: 17px; background: #cdcdcd; margin: 0 auto 0 6px; }
.highlight { position: absolute; left: 1px; top: 14px; width: 482px; height: 37px; border: 3px solid #fa2018; border-radius: 4px; pointer-events: none; }

.status { height: 21px; flex: none; display: flex; align-items: center; gap: 2px; padding: 0 2px 0 3px; white-space: nowrap; }
.coords { flex: 1; display: flex; gap: 10px; }
.status button { height: 18px; width: 34px; border: 1px solid transparent; text-align: left; padding-left: 1px; flex: none; }
.status button:nth-of-type(4), .status button:nth-of-type(5) { width: 58px; }
.status button:nth-of-type(6) { width: 36px; }
.status .on { background: #deebf5; border-color: #0078d7; }
.status a { color: #00f; text-decoration: none; margin-left: 2px; }
.brand { display: flex; align-items: center; gap: 3px; background: #fff; margin-left: 8px; padding: 0 7px 0 6px; height: 18px; color: #222; }
.brand svg { width: 18px; height: 14px; }
```
